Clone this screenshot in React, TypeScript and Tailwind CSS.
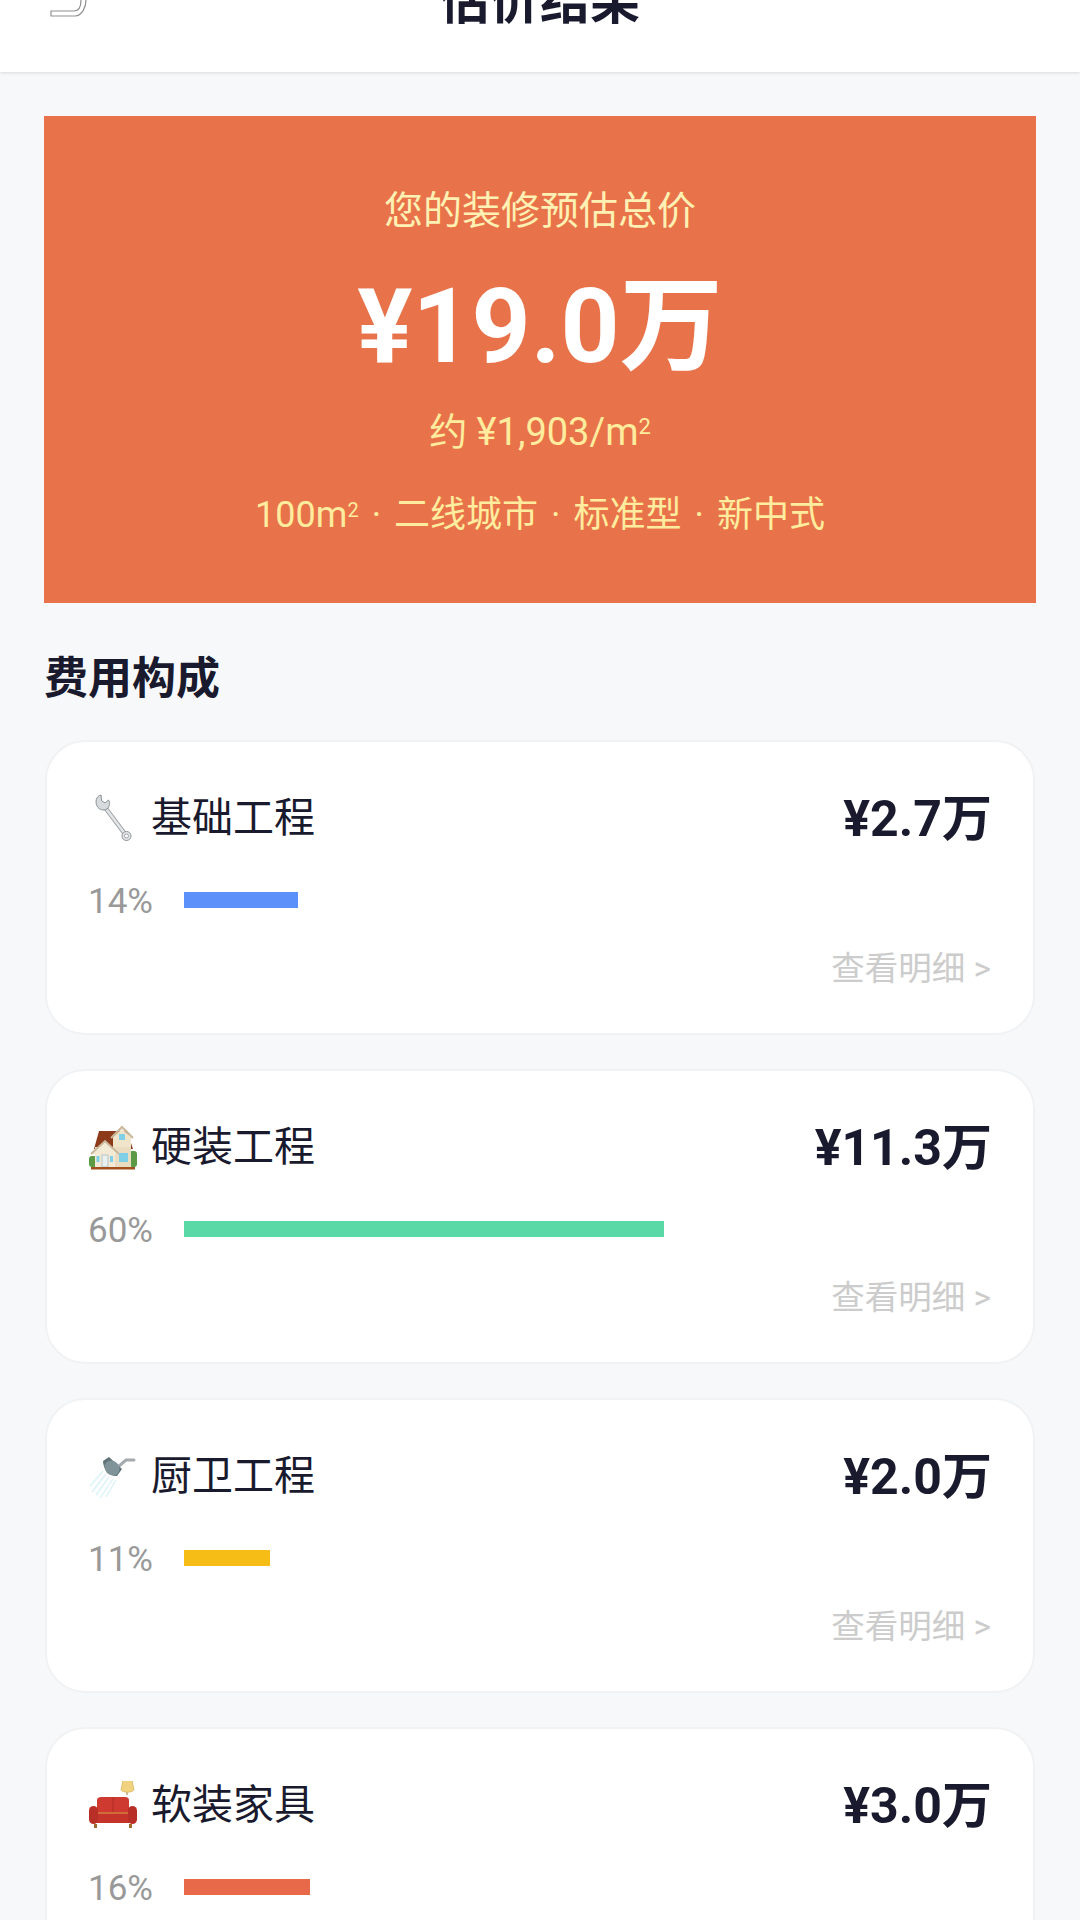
const font = "font-['Roboto','Noto_Sans_CJK_SC',sans-serif]";

function WrenchIcon() {
  return (
    <svg viewBox="0 0 48 48" className="h-12 w-12">
      <path d="M15 12 L36 40" stroke="#9aa0a4" strokeWidth="4.500" strokeLinecap="round" />
      <path d="M15 12 L36 40" stroke="#e4e6e8" strokeWidth="2.500" strokeLinecap="round" />
      <path
        d="M12 1 C7 2 6 8 8 12 C10 16 15 17 18 15 C21 12.500 21 8.500 19.500 6 L16 9 L12.500 6.500 Z"
        fill="#d8dbdd"
        stroke="#8b9195"
        strokeWidth="1"
      />
      <circle cx="37.500" cy="42" r="4.500" fill="#e6e8ea" stroke="#8b9195" strokeWidth="1" />
      <circle cx="37.500" cy="42" r="2" fill="#fff" stroke="#8b9195" strokeWidth="0.800" />
    </svg>
  );
}

function HouseIcon() {
  return (
    <svg viewBox="0 0 48 48" className="h-12 w-12">
      <rect x="0" y="33" width="8" height="11" rx="3" fill="#5c9a46" />
      <rect x="40" y="28" width="8" height="16" rx="3" fill="#5c9a46" />
      <path d="M5 26 L10 8 H38 L44 26 Z" fill="#8c3a1a" />
      <rect x="6" y="24" width="36" height="20" fill="#eadcc0" />
      <path d="M24 14 L33 6 L42 14 V24 H24 Z" fill="#f0e4cb" />
      <path d="M22 15 L33 4 L44 15" fill="none" stroke="#c9b79a" strokeWidth="2" />
      <rect x="30" y="11" width="6" height="6" fill="#7fd0e6" />
      <path d="M2 31 L16 18 L30 31" fill="#f3ead6" stroke="#c9b79a" strokeWidth="2" />
      <rect x="6" y="30" width="20" height="14" fill="#f3ead6" />
      <rect x="7.500" y="33" width="3" height="6" fill="#7fd0e6" />
      <rect x="21" y="33" width="3" height="6" fill="#7fd0e6" />
      <rect x="13" y="32" width="6" height="12" fill="#e8f0f0" stroke="#b9c2c2" strokeWidth="1" />
      <rect x="30" y="30" width="9" height="9" fill="#7fd0e6" />
      <rect x="2" y="44" width="44" height="2.500" fill="#a3501f" />
    </svg>
  );
}

function ShowerIcon() {
  return (
    <svg viewBox="0 0 48 48" className="h-12 w-12">
      <g stroke="#d9f2f7" strokeWidth="1.300">
        <path d="M17 22 L3 40" />
        <path d="M20 25 L7 43" />
        <path d="M24 27 L11 46" />
        <path d="M14 19 L1 34" />
        <path d="M27 28 L17 45" />
      </g>
      <path d="M30 14 L37 8 H45" fill="none" stroke="#a4aaad" strokeWidth="3" strokeLinecap="round" />
      <path d="M14 9 L20 5 L33 17 L28 24 C22 25 14 18 14 9 Z" fill="#5f7378" />
      <ellipse cx="23" cy="16" rx="7" ry="8" transform="rotate(-45 23 16)" fill="#7f9398" />
    </svg>
  );
}

function SofaIcon() {
  return (
    <svg viewBox="0 0 48 48" className="h-12 w-12">
      <path d="M38 14 V6" stroke="#b9a77c" strokeWidth="1.500" />
      <path d="M34 -1 H43 L45 9 C42 12 35 12 32 9 Z" fill="#f1d27e" stroke="#d8b65f" strokeWidth="0.800" />
      <path d="M8 19 C8 17 10 16 12 16 H36 C38 16 40 17 40 19 V33 H8 Z" fill="#cf3a30" />
      <path d="M24 16 V32" stroke="#a82a22" strokeWidth="0.800" />
      <rect x="4" y="31" width="40" height="11" rx="2" fill="#c5342b" />
      <path d="M8 32 H40" stroke="#e2c04e" strokeWidth="0.800" />
      <rect x="0" y="25" width="9" height="18" rx="4.500" fill="#b82f27" />
      <rect x="39" y="25" width="9" height="18" rx="4.500" fill="#b82f27" />
      <rect x="5" y="43" width="3" height="4" fill="#a0682f" />
      <rect x="40" y="43" width="3" height="4" fill="#a0682f" />
    </svg>
  );
}

const items = [
  { name: "基础工程", price: "¥2.7万", pct: "14%", bar: "w-[114px] bg-[#5b8ff9]", icon: <WrenchIcon /> },
  { name: "硬装工程", price: "¥11.3万", pct: "60%", bar: "w-[480px] bg-[#5ad8a6]", icon: <HouseIcon /> },
  { name: "厨卫工程", price: "¥2.0万", pct: "11%", bar: "w-[86px] bg-[#f6bd16]", icon: <ShowerIcon /> },
  { name: "软装家具", price: "¥3.0万", pct: "16%", bar: "w-[126px] bg-[#e8684a]", icon: <SofaIcon /> },
];

function CostCard({ item }: { item: (typeof items)[number] }) {
  return (
    <div className="mx-px h-[295px] shrink-0 rounded-[40px] border-2 border-[#f1f2f4] bg-white px-[41px] pt-[47px]">
      <div className="flex h-[58px] items-center justify-between">
        <div className="ml-px flex items-center gap-[14px]">
          {item.icon}
          <span className="text-[41px] leading-none text-[#1a1a2e]">{item.name}</span>
        </div>
        <span className="pt-[2px] text-[50px] leading-none font-bold text-[#1a1a2e]">{item.price}</span>
      </div>
      <div className="mt-[38px] flex h-[30px] items-center">
        <span className="w-[96px] shrink-0 pt-[2px] text-[35px] leading-none text-[#999]">{item.pct}</span>
        <div className={`h-4 ${item.bar}`} />
      </div>
      <div className="mt-[35px] pr-px text-right text-[33.5px] leading-[38px] text-[#ccc]">查看明细 &gt;</div>
    </div>
  );
}

function Dot() {
  return <span className="mx-[13px]">·</span>;
}

export default function App() {
  return (
    <div className={`h-[1920px] w-[1080px] overflow-hidden bg-[#f7f8fa] ${font}`}>
      {/* page is scrolled: top of the header is cut off */}
      <header className="relative -mt-[78px] flex h-[150px] items-center justify-center bg-white shadow-[0_1px_3px_rgba(0,0,0,0.12)]">
        <svg viewBox="0 0 40 30" className="absolute top-[66px] left-[48px] h-[30px] w-[40px]">
          <path
            d="M20 1 H28 C35 1 38 5 38 12 C38 19 34 28 27 28 H3 V23 H26 C31 23 33 18 33 12 C33 7 31 5 28 5 H20 Z"
            fill="#fff"
            stroke="#8f8f8f"
            strokeWidth="1.200"
          />
        </svg>
        <h1 className="pt-[10px] text-[50px] leading-none font-bold text-[#1a1a2e]">估价结果</h1>
      </header>

      <main className="px-[44px] pt-[44px]">
        <section className="flex h-[487px] flex-col items-center bg-[#e8734a] pt-[72px]">
          <p className="text-[39px] leading-[46px] text-[#fff0b3]">您的装修预估总价</p>
          <p className="mt-[38px] text-[103px] leading-[110px] font-bold text-white">¥19.0万</p>
          <p className="mt-[28px] text-[38px] leading-[44px] text-[#ffec9e]">
            约 ¥1,903/m<sup className="text-[22px]">2</sup>
          </p>
          <p className="mt-[39px] text-[36px] leading-[44px] text-[#ffec9e]">
            100m<sup className="text-[20px]">2</sup>
            <Dot />
            二线城市
            <Dot />
            标准型
            <Dot />
            新中式
          </p>
        </section>

        <h2 className="mt-[51px] mb-[36px] text-[44px] leading-[50px] font-bold text-[#1a1a2e]">费用构成</h2>

        <div className="flex flex-col gap-[34px]">
          {items.map((item) => (
            <CostCard key={item.name} item={item} />
          ))}
        </div>
      </main>
    </div>
  );
}
